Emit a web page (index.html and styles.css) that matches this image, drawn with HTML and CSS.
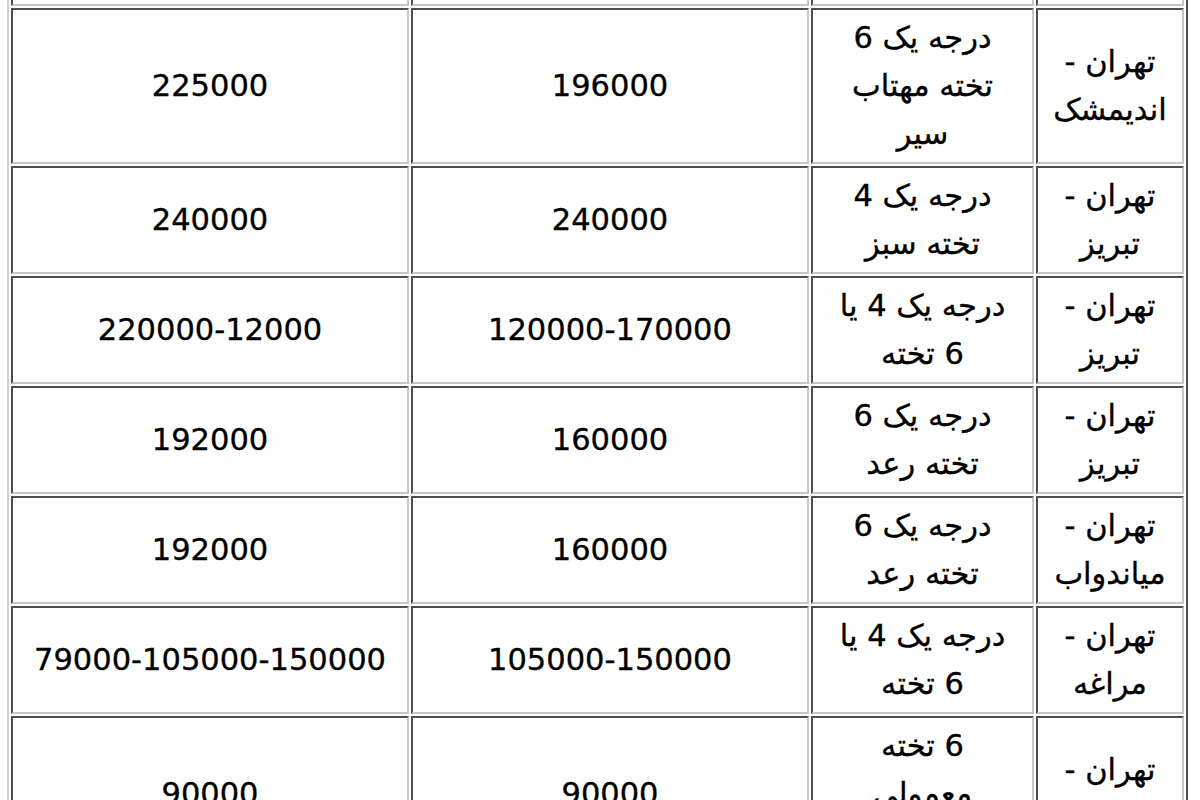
FILE: index.html
```html
<!DOCTYPE html>
<html lang="fa">
<head>
<meta charset="utf-8">
<title>قیمت بلیت قطار</title>
<link rel="stylesheet" href="styles.css">
</head>
<body>
<table class="fares">
  <tbody>
    <tr class="stub">
      <td class="c-route"></td>
      <td class="c-type"></td>
      <td class="c-price"></td>
      <td class="c-price"></td>
    </tr>
    <tr>
      <td class="c-route">تهران -<br>اندیمشک</td>
      <td class="c-type">درجه یک 6<br>تخته مهتاب<br>سیر</td>
      <td class="c-price">196000</td>
      <td class="c-price">225000</td>
    </tr>
    <tr>
      <td class="c-route">تهران -<br>تبریز</td>
      <td class="c-type">درجه یک 4<br>تخته سبز</td>
      <td class="c-price">240000</td>
      <td class="c-price">240000</td>
    </tr>
    <tr>
      <td class="c-route">تهران -<br>تبریز</td>
      <td class="c-type">درجه یک 4 یا<br>6 تخته</td>
      <td class="c-price">120000-170000</td>
      <td class="c-price">220000-12000</td>
    </tr>
    <tr>
      <td class="c-route">تهران -<br>تبریز</td>
      <td class="c-type">درجه یک 6<br>تخته رعد</td>
      <td class="c-price">160000</td>
      <td class="c-price">192000</td>
    </tr>
    <tr>
      <td class="c-route">تهران -<br>میاندواب</td>
      <td class="c-type">درجه یک 6<br>تخته رعد</td>
      <td class="c-price">160000</td>
      <td class="c-price">192000</td>
    </tr>
    <tr>
      <td class="c-route">تهران -<br>مراغه</td>
      <td class="c-type">درجه یک 4 یا<br>6 تخته</td>
      <td class="c-price">105000-150000</td>
      <td class="c-price">79000-105000-150000</td>
    </tr>
    <tr>
      <td class="c-route">تهران -<br>زنجان</td>
      <td class="c-type">6 تخته<br>معمولی<br>ساده</td>
      <td class="c-price">90000</td>
      <td class="c-price">90000</td>
    </tr>
  </tbody>
</table>
</body>
</html>
```
FILE: styles.css
```css
html, body {
  margin: 0;
  padding: 0;
  background: #ffffff;
}

body {
  overflow: hidden;
}

.fares {
  direction: rtl;
  table-layout: fixed;
  width: 1181px;
  margin: -106px 0 0 7px;
  border-collapse: separate;
  border-spacing: 2px;
  border-width: 2px;
  border-style: solid;
  border-color: #d2d2d2 #4e4e4e #4e4e4e #d2d2d2;
  font-family: "DejaVu Sans", Verdana, sans-serif;
  font-size: 30.5px;
  line-height: 48px;
  color: #000000;
  -webkit-text-stroke: 0.35px #000000;
}

.fares td {
  box-sizing: border-box;
  border-width: 2px;
  border-style: solid;
  border-color: #4e4e4e #c6c6c6 #c6c6c6 #4e4e4e;
  padding: 4px 2px;
  text-align: center;
  vertical-align: middle;
  white-space: nowrap;
}

.fares .stub td {
  height: 108px;
}

.fares .c-route {
  width: 148px;
}

.fares .c-type {
  width: 223px;
}

.fares .c-price {
  width: 398px;
}
```
